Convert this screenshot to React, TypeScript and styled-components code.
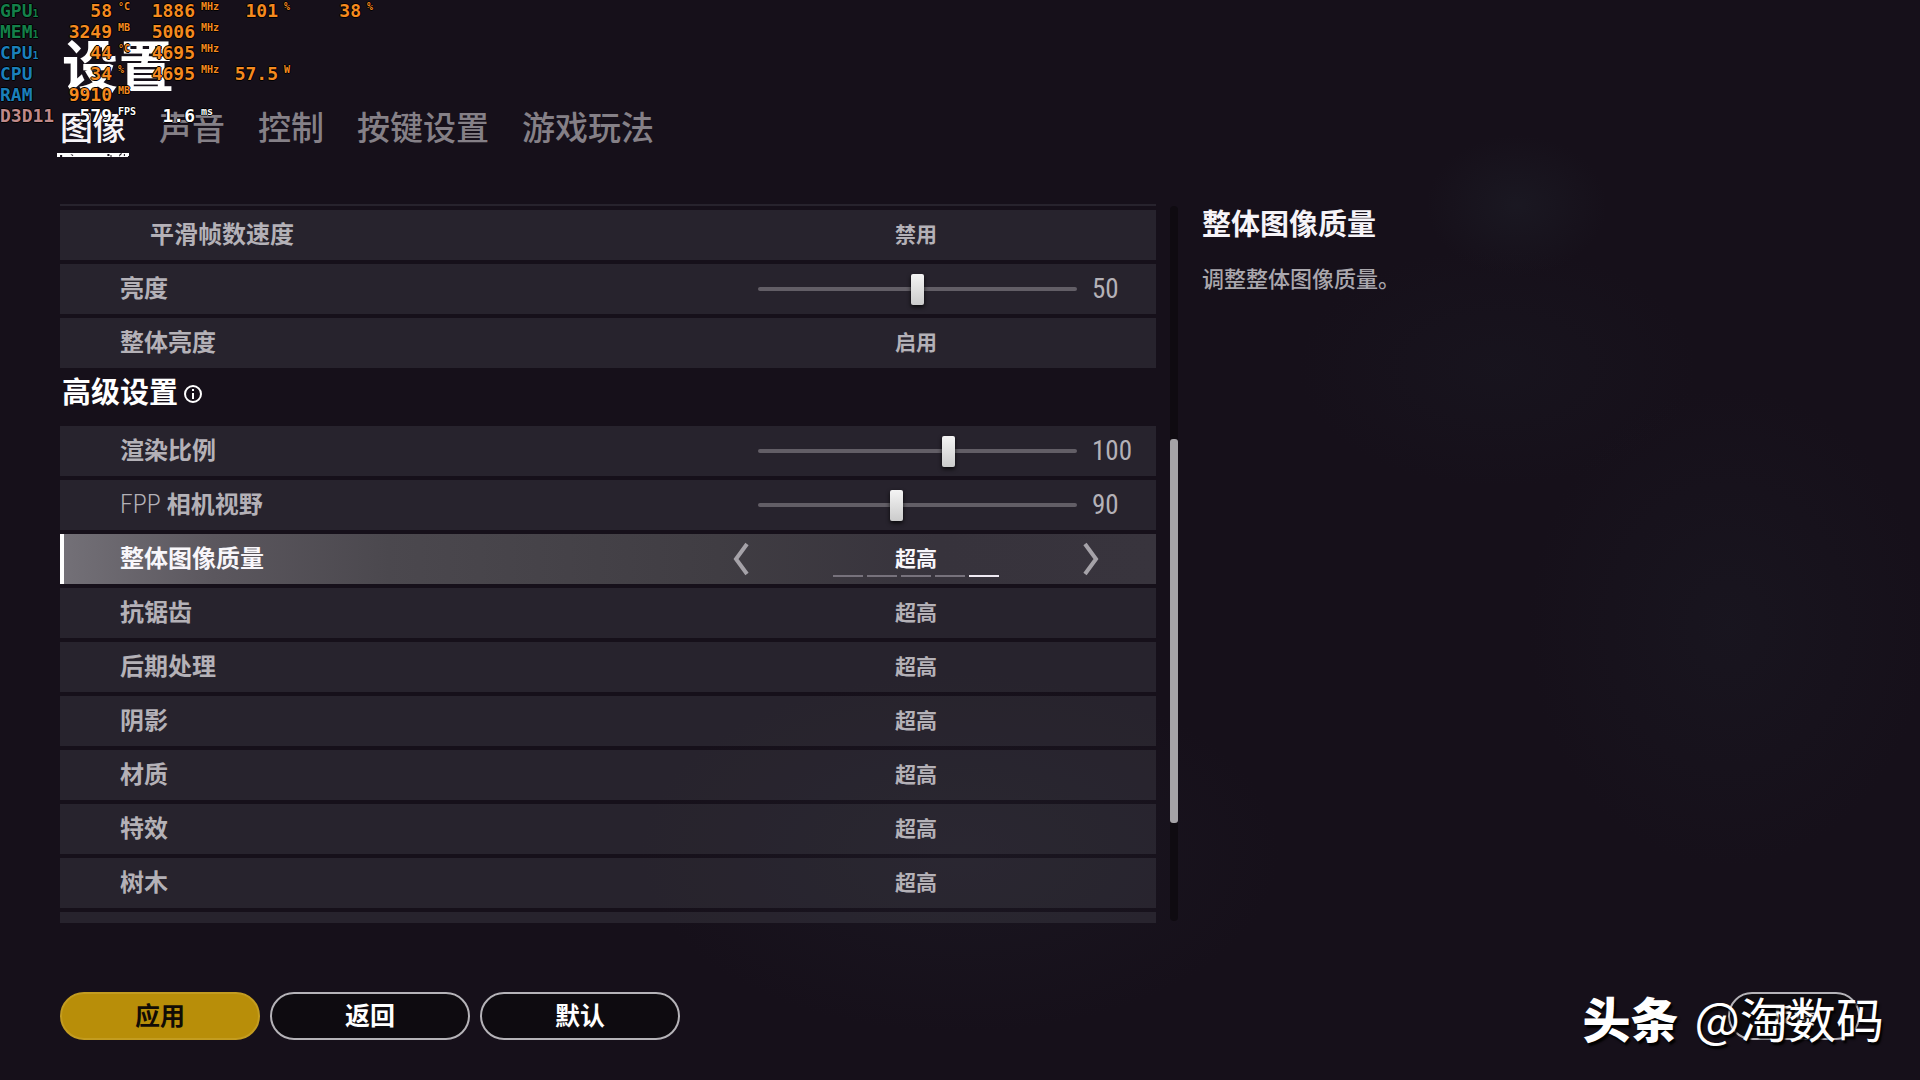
import React, { useState } from "react";
import styled, { createGlobalStyle } from "styled-components";

const cjk = `"Noto Sans CJK SC", sans-serif`;
const condensed = `"Roboto Condensed", Roboto, "Noto Sans CJK SC", sans-serif`;

const GlobalStyle = createGlobalStyle`
  * { box-sizing: border-box; }
  body {
    margin: 0;
    background: #16101a;
    font-family: ${cjk};
  }
  h1, h2, p, ul { margin: 0; padding: 0; }
  button, output { font-family: inherit; }
`;

const Screen = styled.div`
  position: relative;
  display: flex;
  flex-direction: column;
  min-height: 100vh;
  padding: 26px 60px 40px;
  overflow: hidden;
  color: #b4b1b7;
  background:
    radial-gradient(ellipse 90px 70px at 79% 19%, rgba(34, 38, 48, 0.35), transparent),
    radial-gradient(ellipse 200px 120px at 78% 34%, rgba(30, 34, 44, 0.2), transparent),
    radial-gradient(ellipse 200px 240px at 90% 58%, rgba(30, 32, 42, 0.3), transparent),
    radial-gradient(ellipse 320px 180px at 50% 79%, rgba(36, 36, 48, 0.3), transparent),
    #16101a;
`;

const Title = styled.h1`
  padding-left: 2px;
  font-size: 56px;
  line-height: 73px;
  font-weight: 700;
  color: #fff;
`;

const Tabs = styled.nav`
  display: flex;
  gap: 33px;
  height: 105px;
  align-items: flex-start;
`;

const Tab = styled.button<{ $active?: boolean }>`
  position: relative;
  padding: 0 0 3px;
  border: 0;
  background: none;
  font-size: 33px;
  line-height: 55px;
  font-weight: 500;
  color: ${(p) => (p.$active ? "#f6f4f8" : "#858087")};
`;

const Underline = styled.svg`
  position: absolute;
  left: -3px;
  bottom: 0;
  width: calc(100% + 6px);
  height: 4px;
`;

const Body = styled.main`
  display: grid;
  grid-template-columns: minmax(0, 1096fr) 8px minmax(0, 668fr);
  column-gap: 14px;
`;

const List = styled.div`
  display: flex;
  flex-direction: column;
  gap: 4px;
`;

const Sliver = styled.div<{ $h: number }>`
  height: ${(p) => p.$h}px;
  background: rgba(74, 72, 82, 0.34);
`;

const Row = styled.div<{ $active?: boolean; $indent?: boolean }>`
  display: grid;
  grid-template-columns: minmax(0, 1fr) 480px;
  align-items: center;
  height: 50px;
  padding-left: ${(p) => (p.$indent ? 90 : 60)}px;
  color: ${(p) => (p.$active ? "#f8f6fa" : "#b4b1b7")};
  background: ${(p) =>
    p.$active
      ? "linear-gradient(90deg, #fff 4px, #737077 4px, #5b575e 14%, #4b484e 30%, #403d43 60%, #37333c 80%, #38343d)"
      : "rgba(74, 72, 82, 0.34)"};
`;

const Label = styled.label`
  font-size: 24px;
  line-height: 46px;
  height: 50px;
  font-weight: 700;
`;

const Latin = styled.span`
  font-family: ${condensed};
  font-size: 26px;
  font-weight: 300;
`;

const Choice = styled.div`
  display: grid;
  grid-template-columns: 48px 1fr 48px;
  height: 50px;
  padding: 0 41px;
`;

const Value = styled.output`
  position: relative;
  grid-column: 2;
  justify-self: center;
  width: 166px;
  text-align: center;
  font-size: 21px;
  line-height: 46px;
  font-weight: 700;
`;

const Arrow = styled.button`
  display: flex;
  align-items: center;
  justify-content: center;
  padding: 0;
  border: 0;
  background: none;
  color: #a5a2a8;
`;

const Steps = styled.span`
  position: absolute;
  left: 0;
  right: 0;
  bottom: 7px;
  display: grid;
  grid-template-columns: repeat(5, 1fr);
  gap: 4px;
`;

const Step = styled.span<{ $on: boolean }>`
  height: 2px;
  background: ${(p) => (p.$on ? "#efeaf3" : "#77727c")};
`;

const SliderBox = styled.div`
  display: flex;
  align-items: center;
  gap: 15px;
  padding-left: 82px;
`;

const Slider = styled.input`
  appearance: none;
  width: 319px;
  height: 34px;
  margin: 0;
  background: none;
  &::-webkit-slider-runnable-track {
    height: 4px;
    border-radius: 2px;
    background: #625e66;
  }
  &::-webkit-slider-thumb {
    appearance: none;
    width: 13px;
    height: 31px;
    margin-top: -13px;
    border-radius: 2px;
    background: linear-gradient(#f4f4f4, #cbcbcb);
    box-shadow: 0 2px 4px rgba(0, 0, 0, 0.8);
  }
`;

const Amount = styled.output`
  font-family: ${condensed};
  font-size: 27px;
  line-height: 50px;
  font-weight: 400;
`;

const Section = styled.div`
  display: flex;
  align-items: center;
  gap: 5px;
  height: 50px;
  padding: 0 0 14px 2px;
  color: #fff;
  svg { margin-top: 8px; }
`;

const SectionTitle = styled.h2`
  font-size: 29px;
  line-height: 36px;
  font-weight: 700;
`;

const ScrollTrack = styled.div`
  display: flex;
  flex-direction: column;
  margin: 2px 0;
  padding-top: 233px;
  border-radius: 4px;
  background: #0f0b11;
`;

const ScrollThumb = styled.div`
  height: 384px;
  border-radius: 3px;
  background: #a5a3a7;
`;

const Help = styled.aside`
  padding-left: 10px;
`;

const HelpTitle = styled(SectionTitle)`
  color: #f6f4f8;
`;

const HelpText = styled.p`
  padding-top: 18px;
  font-size: 22px;
  line-height: 38px;
  font-weight: 500;
  color: #aaa7ad;
`;

const Footer = styled.footer`
  display: flex;
  gap: 10px;
  margin-top: auto;
`;

const Pill = styled.button<{ $primary?: boolean; $end?: boolean }>`
  width: ${(p) => (p.$end ? 132 : 200)}px;
  height: 48px;
  margin-left: ${(p) => (p.$end ? "auto" : 0)};
  padding: 0 0 4px;
  border: 2px solid ${(p) => (p.$primary ? "#c39c20" : "#b5b3b8")};
  border-radius: 24px;
  background: ${(p) => (p.$primary ? "#b88e09" : "#0e0b10")};
  color: ${(p) => (p.$primary ? "#110c05" : "#fff")};
  font-size: ${(p) => (p.$end ? 21 : 25)}px;
  line-height: 40px;
  font-weight: 700;
`;

const Monitor = styled.div`
  position: absolute;
  top: 0;
  left: 0;
  font-family: "DejaVu Sans Mono", monospace;
  font-weight: 700;
  text-shadow: 1px 0 #000, -1px 0 #000, 0 1px #000, 0 -1px #000;
`;

const MonitorRow = styled.div<{ $white?: boolean }>`
  display: grid;
  grid-template-columns: 56px repeat(4, 83px);
  height: 21px;
  color: ${(p) => (p.$white ? "#fff" : "#f58a1f")};
`;

const MonitorName = styled.span<{ $color: string }>`
  font-size: 18px;
  line-height: 21px;
  white-space: nowrap;
  color: ${(p) => p.$color};
  small { font-size: 10px; }
`;

const Metric = styled.span`
  display: grid;
  grid-template-columns: 56px 27px;
  font-size: 18px;
  line-height: 21px;
  text-align: right;
`;

const Unit = styled.sup`
  padding-left: 6px;
  font-size: 10px;
  line-height: 14px;
  text-align: left;
  vertical-align: top;
`;

const Watermark = styled.div`
  position: absolute;
  right: 36px;
  bottom: 27px;
  display: flex;
  gap: 16px;
  font-size: 48px;
  line-height: 72px;
  color: #fff;
  text-shadow: 2px 3px 2px #000;
  b { font-weight: 900; }
`;

type Reading = { name: string; sub?: string; color: string; white?: boolean; data: [string, string][] };

const readings: Reading[] = [
  { name: "GPU", sub: "1", color: "#14804a", data: [["58", "°C"], ["1886", "MHz"], ["101", "%"], ["38", "%"]] },
  { name: "MEM", sub: "1", color: "#14804a", data: [["3249", "MB"], ["5006", "MHz"]] },
  { name: "CPU", sub: "1", color: "#1b7fba", data: [["44", "°C"], ["4695", "MHz"]] },
  { name: "CPU", color: "#1b7fba", data: [["34", "%"], ["4695", "MHz"], ["57.5", "W"]] },
  { name: "RAM", color: "#1b7fba", data: [["9910", "MB"]] },
  { name: "D3D11", color: "#c08a8a", white: true, data: [["579", "FPS"], ["1.6", "ms"]] },
];

function ChoiceRow({ id, label, value, indent, active }: { id: string; label: string; value: string; indent?: boolean; active?: boolean }) {
  return (
    <Row $active={active} $indent={indent}>
      <Label htmlFor={id}>{label}</Label>
      <Choice>
        {active && (
          <Arrow aria-label="上一个">
            <svg width="18" height="34" viewBox="0 0 18 34" fill="none" stroke="currentColor" strokeWidth="4">
              <path d="M15 2 4 17l11 15" />
            </svg>
          </Arrow>
        )}
        <Value id={id}>
          {value}
          {active && <Steps>{[0, 1, 2, 3, 4].map((n) => <Step key={n} $on={n === 4} />)}</Steps>}
        </Value>
        {active && (
          <Arrow aria-label="下一个">
            <svg width="18" height="34" viewBox="0 0 18 34" fill="none" stroke="currentColor" strokeWidth="4">
              <path d="m3 2 11 15L3 32" />
            </svg>
          </Arrow>
        )}
      </Choice>
    </Row>
  );
}

function SliderRow({ id, label, min = 0, max, start }: { id: string; label: React.ReactNode; min?: number; max: number; start: number }) {
  const [value, setValue] = useState(start);
  return (
    <Row>
      <Label htmlFor={id}>{label}</Label>
      <SliderBox>
        <Slider id={id} type="range" min={min} max={max} value={value} onChange={(e) => setValue(Number(e.target.value))} />
        <Amount htmlFor={id}>{value}</Amount>
      </SliderBox>
    </Row>
  );
}

const quality = ["抗锯齿", "后期处理", "阴影", "材质", "特效", "树木"];

export default function App() {
  return (
    <Screen>
      <GlobalStyle />
      <Title>设置</Title>
      <Tabs>
        <Tab $active>
          图像
          <Underline viewBox="0 0 70 4" preserveAspectRatio="none" aria-hidden="true">
            <path fill="#fff" d="M0 0h70v3h-1v1H0z" />
            <path fill="#16101a" d="M3 2h2v2H3zM13 1l3 1-1 1zM49 1h2v2h-2zM52 2h1v2h-1zM61 1l2-1v1l-3 3zM65 1h1v2h-1z" />
          </Underline>
        </Tab>
        <Tab>声音</Tab>
        <Tab>控制</Tab>
        <Tab>按键设置</Tab>
        <Tab>游戏玩法</Tab>
      </Tabs>
      <Body>
        <List>
          <Sliver $h={2} />
          <ChoiceRow id="smooth" label="平滑帧数速度" value="禁用" indent />
          <SliderRow id="bright" label="亮度" max={100} start={50} />
          <ChoiceRow id="global" label="整体亮度" value="启用" />
          <Section>
            <SectionTitle>高级设置</SectionTitle>
            <svg width="20" height="20" viewBox="0 0 20 20" fill="none" stroke="#fff" strokeWidth="2">
              <circle cx="10" cy="10" r="8" />
              <path d="M10 9v6M10 5v2" />
            </svg>
          </Section>
          <SliderRow id="scale" label="渲染比例" max={166} start={100} />
          <SliderRow id="fov" label={<><Latin>FPP </Latin>相机视野</>} min={20} max={182} start={90} />
          <ChoiceRow id="overall" label="整体图像质量" value="超高" active />
          {quality.map((name, i) => (
            <ChoiceRow key={name} id={`quality-${i}`} label={name} value="超高" />
          ))}
          <Sliver $h={11} />
        </List>
        <ScrollTrack>
          <ScrollThumb />
        </ScrollTrack>
        <Help>
          <HelpTitle>整体图像质量</HelpTitle>
          <HelpText>调整整体图像质量。</HelpText>
        </Help>
      </Body>
      <Footer>
        <Pill $primary>应用</Pill>
        <Pill>返回</Pill>
        <Pill>默认</Pill>
        <Pill $end>反馈</Pill>
      </Footer>
      <Monitor>
        {readings.map((r, i) => (
          <MonitorRow key={i} $white={r.white}>
            <MonitorName $color={r.color}>
              {r.name}
              {r.sub && <small>{r.sub}</small>}
            </MonitorName>
            {r.data.map(([value, unit], n) => (
              <Metric key={n}>
                {value}
                <Unit>{unit}</Unit>
              </Metric>
            ))}
          </MonitorRow>
        ))}
      </Monitor>
      <Watermark>
        <b>头条</b>
        <span>@淘数码</span>
      </Watermark>
    </Screen>
  );
}
